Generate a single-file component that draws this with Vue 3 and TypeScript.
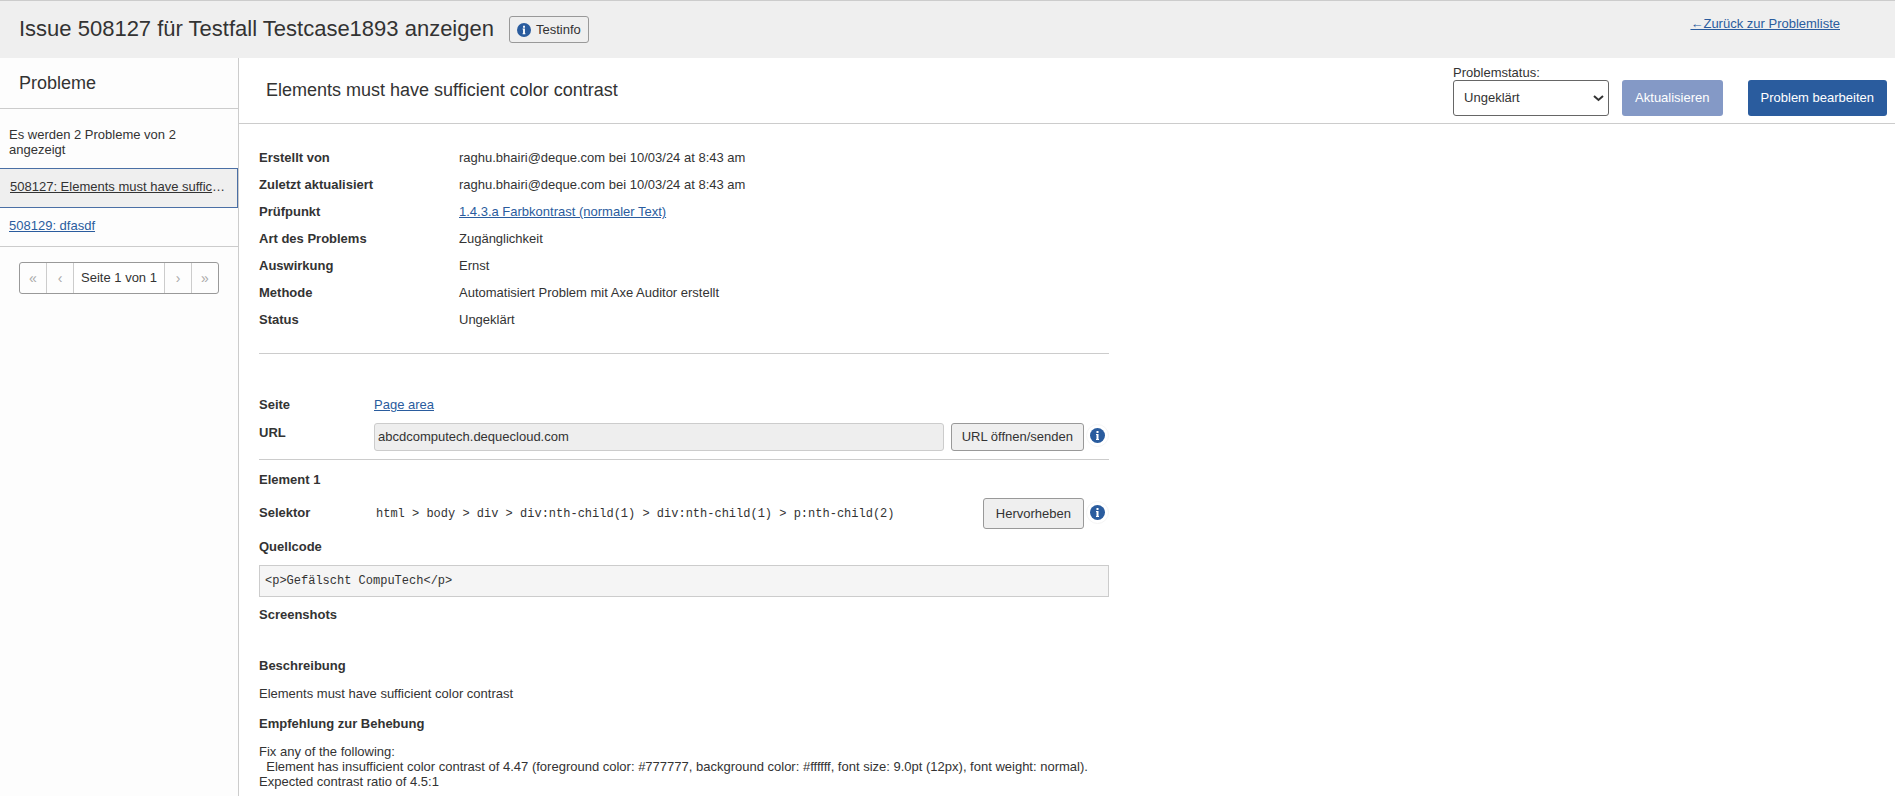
<script setup lang="ts">
import { ref } from 'vue'

interface Issue {
  id: number
  title: string
  active: boolean
}

interface Detail {
  term: string
  value: string
  link?: boolean
}

const issues: Issue[] = [
  { id: 508127, title: 'Elements must have sufficient color contrast', active: true },
  { id: 508129, title: 'dfasdf', active: false },
]

const details: Detail[] = [
  { term: 'Erstellt von', value: 'raghu.bhairi@deque.com bei 10/03/24 at 8:43 am' },
  { term: 'Zuletzt aktualisiert', value: 'raghu.bhairi@deque.com bei 10/03/24 at 8:43 am' },
  { term: 'Prüfpunkt', value: '1.4.3.a Farbkontrast (normaler Text)', link: true },
  { term: 'Art des Problems', value: 'Zugänglichkeit' },
  { term: 'Auswirkung', value: 'Ernst' },
  { term: 'Methode', value: 'Automatisiert Problem mit Axe Auditor erstellt' },
  { term: 'Status', value: 'Ungeklärt' },
]

const status = ref('Ungeklärt')
const url = ref('abcdcomputech.dequecloud.com')
const selector = 'html > body > div > div:nth-child(1) > div:nth-child(1) > p:nth-child(2)'
const source = '<p>Gefälscht CompuTech</p>'
const remediation = `Fix any of the following:
  Element has insufficient color contrast of 4.47 (foreground color: #777777, background color: #ffffff, font size: 9.0pt (12px), font weight: normal). Expected contrast ratio of 4.5:1`
</script>

<template>
  <div class="page">
    <header class="topbar">
      <h1>Issue 508127 für Testfall Testcase1893 anzeigen</h1>
      <button type="button" class="btn testinfo">
        <svg class="info" viewBox="0 0 15 15" aria-hidden="true">
          <circle cx="7.5" cy="7.5" r="7.5" fill="#2a5c9e" />
          <path d="M6.5 3h2v2h-2zM6 6h2.5v5H9v1H6v-1h.5V7H6z" fill="#fff" />
        </svg>
        Testinfo
      </button>
      <a href="#" class="back">←Zurück zur Problemliste</a>
    </header>

    <div class="body">
      <aside class="sidebar">
        <h2>Probleme</h2>
        <p class="count">Es werden 2 Probleme von 2 angezeigt</p>
        <ul class="issues">
          <li v-for="issue in issues" :key="issue.id" :class="{ active: issue.active }">
            <a href="#">{{ issue.id }}: {{ issue.title }}</a>
          </li>
        </ul>
        <nav class="pager" aria-label="Seiten">
          <button type="button" disabled aria-label="Erste Seite">«</button>
          <button type="button" disabled aria-label="Vorherige Seite">‹</button>
          <span>Seite 1 von 1</span>
          <button type="button" disabled aria-label="Nächste Seite">›</button>
          <button type="button" disabled aria-label="Letzte Seite">»</button>
        </nav>
      </aside>

      <main class="main">
        <div class="bar">
          <h2>Elements must have sufficient color contrast</h2>
          <div class="status">
            <label for="status">Problemstatus:</label>
            <div class="select">
              <select id="status" v-model="status">
                <option>Ungeklärt</option>
              </select>
              <svg viewBox="0 0 11 8" aria-hidden="true">
                <path d="M1 2l4.500 4 4.500-4" fill="none" stroke="#333" stroke-width="2" />
              </svg>
            </div>
          </div>
          <button type="button" class="primary" disabled>Aktualisieren</button>
          <button type="button" class="primary edit">Problem bearbeiten</button>
        </div>

        <div class="content">
          <dl class="details">
            <template v-for="item in details" :key="item.term">
              <dt>{{ item.term }}</dt>
              <dd>
                <a v-if="item.link" href="#">{{ item.value }}</a>
                <template v-else>{{ item.value }}</template>
              </dd>
            </template>
          </dl>

          <section class="location">
            <div class="row">
              <h3>Seite</h3>
              <a href="#">Page area</a>
            </div>
            <div class="row url-row">
              <label for="url">URL</label>
              <input id="url" v-model="url" type="text" readonly />
              <button type="button" class="btn open">URL öffnen/senden</button>
              <button type="button" class="hint" aria-label="Info zur URL">
                <svg class="info" viewBox="0 0 15 15" aria-hidden="true">
                  <circle cx="7.5" cy="7.5" r="7.5" fill="#2a5c9e" />
                  <path d="M6.5 3h2v2h-2zM6 6h2.500v5H9v1H6v-1h.5V7H6z" fill="#fff" />
                </svg>
              </button>
            </div>
          </section>

          <section class="element">
            <h3>Element 1</h3>
            <div class="row selector-row">
              <h3>Selektor</h3>
              <code>{{ selector }}</code>
              <button type="button" class="btn mark">Hervorheben</button>
              <button type="button" class="hint" aria-label="Info zum Hervorheben">
                <svg class="info" viewBox="0 0 15 15" aria-hidden="true">
                  <circle cx="7.5" cy="7.5" r="7.5" fill="#2a5c9e" />
                  <path d="M6.5 3h2v2h-2zM6 6h2.500v5H9v1H6v-1h.5V7H6z" fill="#fff" />
                </svg>
              </button>
            </div>
            <h3>Quellcode</h3>
            <pre class="source"><code>{{ source }}</code></pre>
            <h3>Screenshots</h3>
          </section>

          <section class="text">
            <h3>Beschreibung</h3>
            <p>Elements must have sufficient color contrast</p>
            <h3>Empfehlung zur Behebung</h3>
            <p class="fix">{{ remediation }}</p>
          </section>
        </div>
      </main>
    </div>
  </div>
</template>

<style>
body {
  margin: 0;
  background: #fff;
}
</style>

<style scoped>
* {
  box-sizing: border-box;
}

.page {
  display: flex;
  flex-direction: column;
  min-height: 100vh;
  color: #333;
  font-family: "Liberation Sans", Arial, sans-serif;
  font-size: 13px;
  line-height: 15px;
}

h1,
h2,
h3,
p,
ul,
dl,
dd,
pre {
  margin: 0;
}

h3,
dt,
.url-row label {
  font-size: 13px;
  font-weight: 700;
}

a {
  color: #2a5c9e;
}

button,
input,
select {
  color: inherit;
  font: inherit;
}

.topbar {
  display: flex;
  align-items: flex-start;
  height: 58px;
  padding: 0 55px 0 19px;
  border-top: 1px solid #ccc;
  background: #efefef;
}

h1 {
  margin-top: 15px;
  font-size: 22px;
  font-weight: 400;
  line-height: 26px;
}

.btn {
  border: 1px solid #999;
  border-radius: 3px;
  background: #efefef;
}

.testinfo {
  display: flex;
  align-items: center;
  gap: 5px;
  height: 27px;
  margin: 15px 0 0 15px;
  padding: 0 7px;
}

.info {
  display: block;
  width: 15px;
  height: 15px;
}

.testinfo .info {
  width: 14px;
  height: 14px;
}

.back {
  margin: 15px 0 0 auto;
}

.body {
  display: flex;
  flex: 1;
}

.sidebar {
  flex: none;
  width: 239px;
  border-right: 1px solid #ccc;
  background: #fdfdfd;
}

h2 {
  font-size: 18px;
  font-weight: 400;
  line-height: 20px;
}

.sidebar h2 {
  padding: 15px 19px;
  border-bottom: 1px solid #ccc;
}

.count {
  padding: 18px 50px 11px 9px;
}

.issues {
  padding: 0;
  border-bottom: 1px solid #ccc;
  list-style: none;
}

.issues li {
  padding: 10px 9px 13px;
  overflow: hidden;
  text-overflow: ellipsis;
  white-space: nowrap;
}

.issues .active {
  padding: 10px 11px 13px 10px;
  border: 1px solid #4a6fa5;
  border-left: 0;
  background: #efefef;
}

.issues .active a {
  color: #333;
}

.pager {
  display: flex;
  width: 200px;
  height: 32px;
  margin: 15px 19px;
  border: 1px solid #999;
  border-radius: 3px;
}

.pager button {
  width: 27px;
  padding: 0;
  border: 0;
  background: none;
  color: #aaa;
  font-size: 14px;
}

.pager button:first-child {
  width: 26px;
}

.pager button + button,
.pager span + button {
  border-left: 1px solid #ccc;
}

.pager span {
  flex: 1;
  border-left: 1px solid #ccc;
  background: #fff;
  line-height: 30px;
  text-align: center;
}

.main {
  flex: 1;
  min-width: 0;
}

.bar {
  display: flex;
  align-items: flex-end;
  height: 66px;
  padding: 0 8px 7px 27px;
  border-bottom: 1px solid #ccc;
}

.bar h2 {
  flex: 1;
  align-self: flex-start;
  margin-top: 22px;
}

.status {
  width: 156px;
  margin-right: 13px;
}

.status label {
  display: block;
}

.select {
  position: relative;
}

.select select {
  display: block;
  width: 100%;
  height: 36px;
  padding: 0 24px 1px 10px;
  border: 1px solid #666;
  border-radius: 3px;
  background: #fff;
  appearance: none;
}

.select svg {
  position: absolute;
  top: 14px;
  right: 5px;
  width: 11px;
  height: 8px;
  pointer-events: none;
}

.primary {
  height: 36px;
  padding: 0 13px 1px;
  border: 0;
  border-radius: 3px;
  background: #2a5c9e;
  color: #fff;
}

.primary:disabled {
  background: #8499c6;
}

.edit {
  margin-left: 25px;
}

.content {
  max-width: 890px;
  padding: 0 20px;
}

.details {
  display: grid;
  grid-template-columns: 200px 1fr;
  row-gap: 12px;
  padding: 26px 0;
  border-bottom: 1px solid #ccc;
}

.location {
  padding: 43px 0 8px;
  border-bottom: 1px solid #ccc;
}

.row {
  display: flex;
}

.row > :first-child {
  flex: none;
  width: 115px;
}

.url-row {
  margin-top: 11px;
}

.url-row label {
  margin-top: 2px;
}

.url-row input {
  flex: 1;
  min-width: 0;
  height: 28px;
  padding: 0 3px 1px;
  border: 1px solid #ccc;
  border-radius: 3px;
  background: #eee;
}

.open {
  height: 28px;
  margin-left: 7px;
  padding: 0 10px 1px;
}

.hint {
  display: flex;
  align-items: center;
  justify-content: center;
  width: 23px;
  height: 23px;
  margin: 1px 0 0 2px;
  padding: 0;
  border: 1px solid #f5f5f5;
  border-radius: 50%;
  background: #fff;
}

.element {
  padding-top: 12px;
}

.selector-row {
  margin: 11px 0 10px;
}

.selector-row h3 {
  margin-top: 7px;
}

.selector-row .hint {
  margin-top: 3px;
}

.selector-row code {
  flex: 1;
  padding: 9px 2px 0;
}

.mark {
  height: 31px;
  padding: 0 12px;
}

code {
  display: block;
  font-family: "Liberation Mono", Consolas, monospace;
  font-size: 12px;
}

.source {
  margin: 11px 0 10px;
  padding: 8px 5px 7px;
  border: 1px solid #ccc;
  background: #f5f5f5;
}

.text {
  padding-top: 36px;
}

.text p {
  margin: 13px 0 15px;
}

.text .fix {
  margin-bottom: 6px;
  white-space: pre-wrap;
}
</style>
